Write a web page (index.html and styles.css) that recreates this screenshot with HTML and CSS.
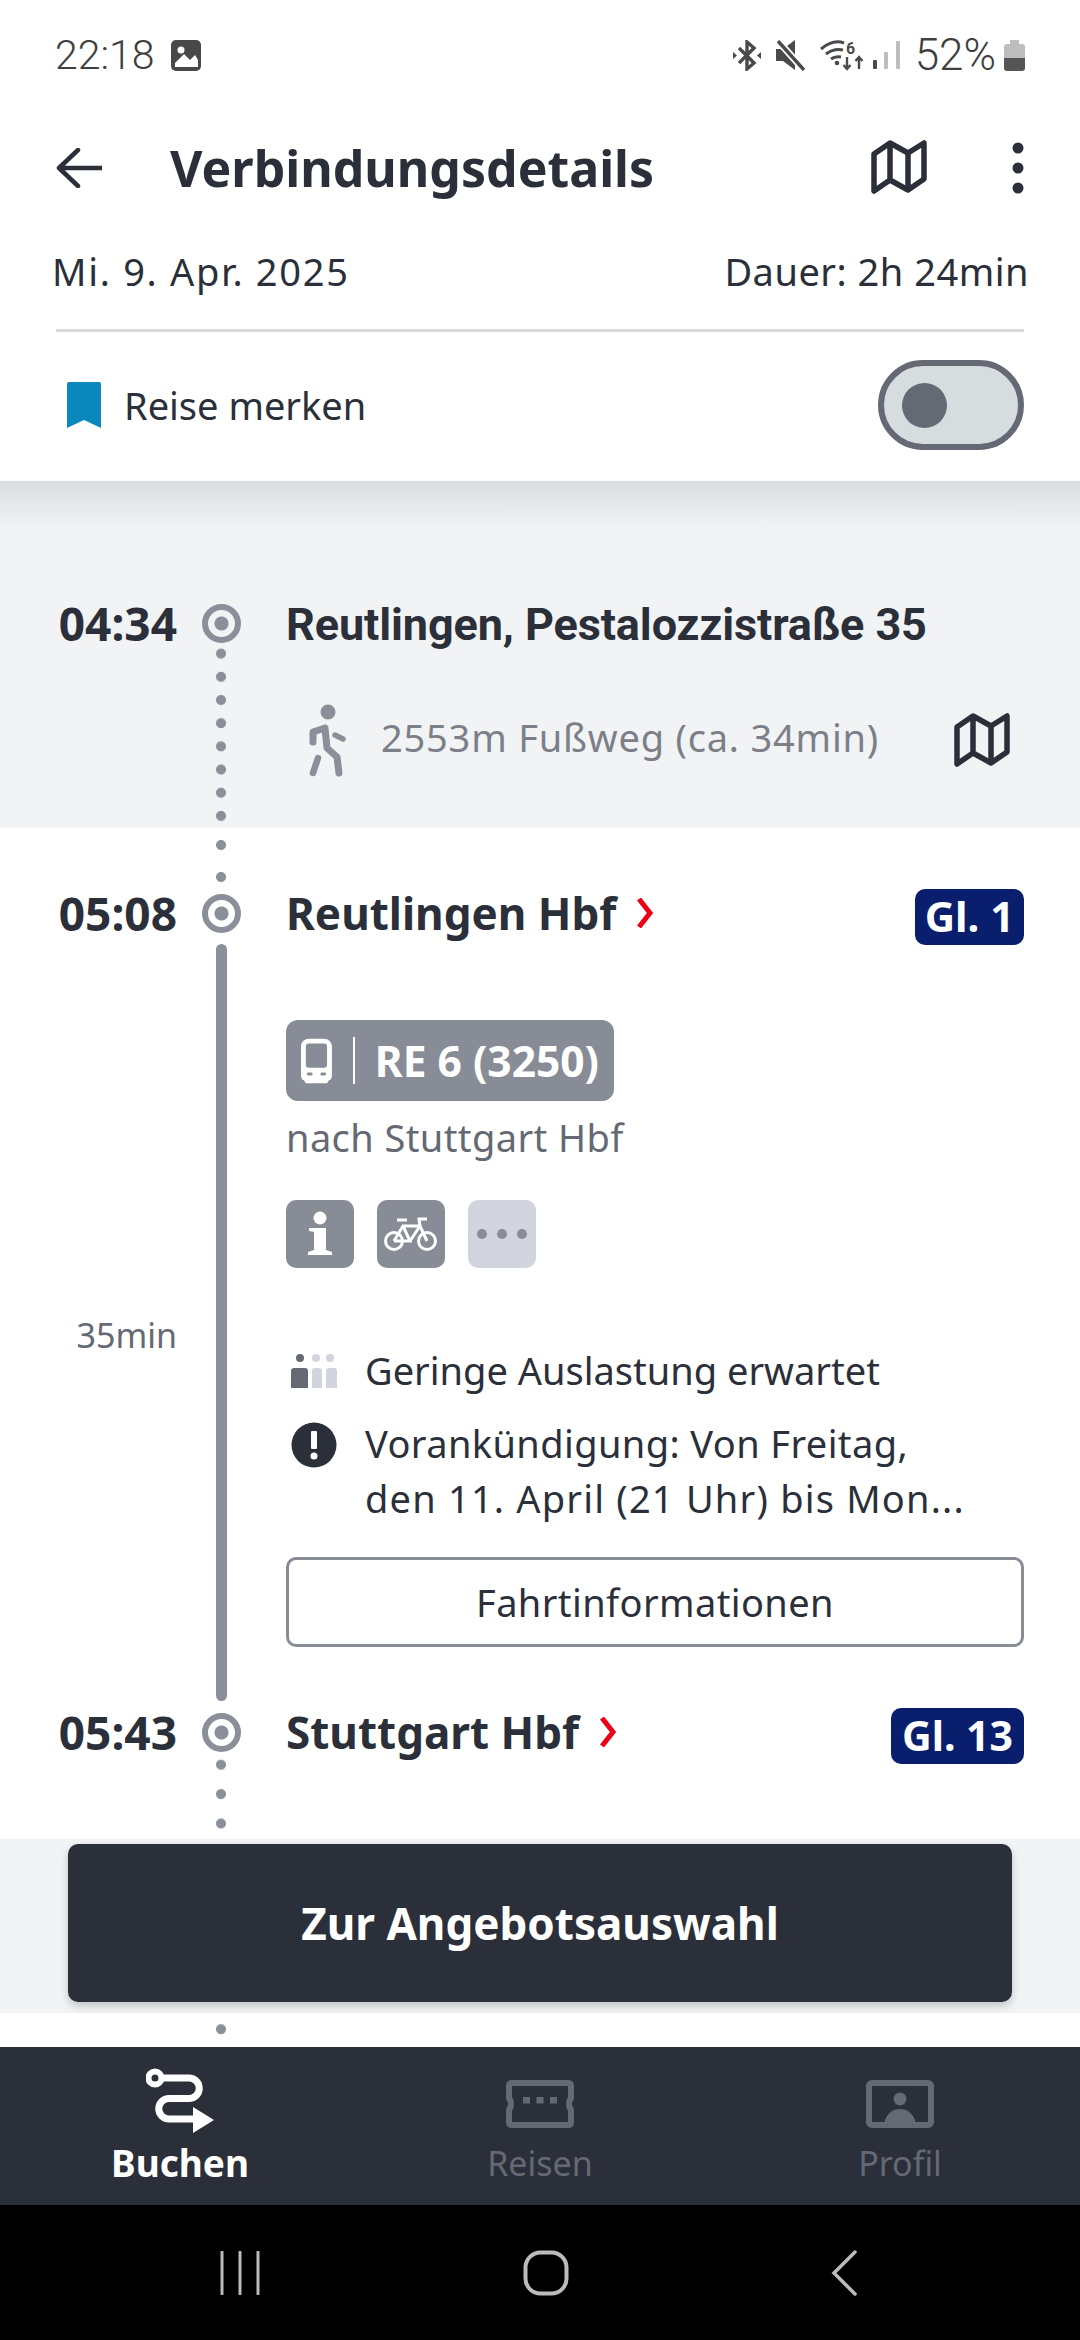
FILE: index.html
```html
<!DOCTYPE html>
<html lang="de">
<head>
    <meta charset="UTF-8">
    <meta name="viewport" content="width=device-width, initial-scale=1.0">
    <title>Verbindungsdetails</title>
    <link rel="stylesheet" href="styles.css">
</head>
<body>
<div class="page">
    <!-- Statusleiste -->
    <div class="status-bar">
        <div class="status-left">
            <span class="status-text">22:18</span>
            <svg width="30" height="31" viewBox="0 0 30 31"><rect width="30" height="31" rx="5" fill="#484848"/><circle cx="10" cy="10" r="3.500" fill="#fff"/><path d="M4 27 V23 L13 14 L19 20 L24 15 L27 20 V27 Z" fill="#fff"/></svg>
        </div>
        <div class="status-right">
            <svg width="28" height="31" viewBox="0 0 28 31"><path d="M6 8 L21 23 L14 29 V2 L21 8 L6 23" fill="none" stroke="#4a4a4a" stroke-width="3.4"/><path d="M0 12 L4 15.5 L0 19 Z M28 12 L24 15.5 L28 19 Z" fill="#4a4a4a"/></svg>
            <svg width="30" height="31" viewBox="0 0 30 31"><path d="M1 9 H8 L20 0 V30 L8 21 H1 Z" fill="#4a4a4a"/><path d="M3 1 L29 30" stroke="#fff" stroke-width="7"/><path d="M3 1 L29 30" stroke="#4a4a4a" stroke-width="3.4"/></svg>
            <svg width="45" height="32" viewBox="0 0 45 32"><g fill="none" stroke="#4a4a4a" stroke-width="3"><path d="M2 10 Q14 0 25 4"/><path d="M7 15 Q15 9 24 11"/><path d="M12 20 Q16 17 22 18"/></g><circle cx="18" cy="24" r="2.3" fill="#4a4a4a"/><text class="wifi-six" x="27" y="15">6</text><path d="M28 18 V30 M24.500 26 L28 30 L31.500 26 M40 30 V18 M36.500 22 L40 18 L43.500 22" fill="none" stroke="#4a4a4a" stroke-width="2.400"/></svg>
            <svg class="status-tight" width="29" height="30" viewBox="0 0 29 30"><rect x="1" y="20" width="4" height="9" rx="1" fill="#4a4a4a"/><rect x="12" y="12" width="4" height="17" rx="1" fill="#bdbdbd"/><rect x="24" y="1" width="4" height="28" rx="1" fill="#bdbdbd"/></svg>
            <span class="status-text status-percent">52%</span>
            <svg class="status-tight" width="21" height="31" viewBox="0 0 21 31"><path d="M6 0 H15 V4 H18 Q21 4 21 7 V18 H0 V7 Q0 4 3 4 H6 Z" fill="#bdbdbd"/><path d="M0 18 H21 V28 Q21 31 18 31 H3 Q0 31 0 28 Z" fill="#555"/></svg>
        </div>
    </div>

    <!-- Kopfbereich -->
    <header class="app-header">
        <div class="title-bar">
            <svg width="46" height="40" viewBox="0 0 46 40"><path d="M22 2 L3 20 L22 38 M3 20 H46" fill="none" stroke="#2b2f3a" stroke-width="4.500" stroke-linecap="round" stroke-linejoin="round"/></svg>
            <h1>Verbindungsdetails</h1>
            <svg class="map-icon" width="56" height="55" viewBox="0 0 56 55"><use href="#map"/></svg>
            <svg class="more-icon" width="12" height="52" viewBox="0 0 12 52"><circle cx="6" cy="6" r="5.500"/><circle cx="6" cy="26" r="5.500"/><circle cx="6" cy="46" r="5.500"/></svg>
        </div>
        <div class="meta-row">
            <span class="meta-date">Mi. 9. Apr. 2025</span>
            <span class="meta-duration">Dauer: 2h 24min</span>
        </div>
        <div class="divider"></div>
        <div class="save-row">
            <svg width="34" height="46" viewBox="0 0 34 46"><path d="M2 0 H32 Q34 0 34 2 V46 L17 38 L0 46 V2 Q0 0 2 0 Z" fill="#0a87bd"/></svg>
            <span class="save-label">Reise merken</span>
            <div class="toggle"><span class="toggle-knob"></span></div>
        </div>
    </header>

    <main class="journey">
        <!-- Fussweg -->
        <section class="walk-section">
            <div class="stop">
                <span class="stop-time">04:34</span>
                <span class="stop-ring"></span>
                <span class="stop-name stop-name-address">Reutlingen, Pestalozzistraße 35</span>
            </div>
            <div class="segment">
                <span></span>
                <div class="rail rail-dots-tight"></div>
                <div class="walk-row">
                    <svg width="40" height="74" viewBox="0 0 40 74"><circle cx="20" cy="8" r="7.500" fill="#8a8f9a"/><g fill="none" stroke="#8a8f9a" stroke-linecap="round" stroke-linejoin="round"><path d="M5 38 V28 L17 24 L19 44 L29 53 L31 69" stroke-width="7"/><path d="M10 54 L5 69" stroke-width="6.500"/><path d="M27 31 L35 35" stroke-width="5.500"/></g></svg>
                    <span class="walk-text">2553m Fußweg (ca. 34min)</span>
                    <svg class="walk-map" width="58" height="55" viewBox="0 0 56 55"><use href="#map"/></svg>
                </div>
            </div>
        </section>

        <!-- Zug -->
        <section class="leg-section">
            <div class="connector"><span></span><div class="rail rail-dots-wide"></div></div>
            <div class="stop">
                <span class="stop-time">05:08</span>
                <span class="stop-ring"></span>
                <span class="stop-name">Reutlingen Hbf</span>
                <svg class="stop-chevron" width="18" height="30" viewBox="0 0 18 30"><path d="M3 1 L14 15 L3 29" fill="none" stroke="#ec0016" stroke-width="5"/></svg>
                <span class="track">Gl. 1</span>
            </div>
            <div class="segment">
                <span class="duration">35min</span>
                <div class="rail"><div class="rail-line"></div></div>
                <div class="leg-body">
                    <div class="train-badge">
                        <svg width="32" height="46" viewBox="0 0 32 46"><path fill-rule="evenodd" d="M9 0 H23 Q32 0 32 9 V38 Q32 42 29 43 L27 46 H5 L3 43 Q0 42 0 38 V9 Q0 0 9 0 Z M8 5 Q5 5 5 8 V27 Q5 30 8 30 H24 Q27 30 27 27 V8 Q27 5 24 5 Z" fill="#fff"/><rect x="6" y="35" width="6" height="3" rx="1.500" fill="#878c96"/><rect x="20" y="35" width="6" height="3" rx="1.500" fill="#878c96"/></svg>
                        <span class="train-sep"></span>
                        <span class="train-name">RE 6 (3250)</span>
                    </div>
                    <div class="destination">nach Stuttgart Hbf</div>
                    <div class="amenities">
                        <span class="amenity">
                            <svg width="68" height="68" viewBox="0 0 68 68"><circle cx="34" cy="18" r="6.500" fill="#fff"/><path d="M23 28 H40 V50 L46 52 V55 H22 V52 L28 50 V32 L23 31 Z" fill="#fff"/></svg>
                        </span>
                        <span class="amenity">
                            <svg width="68" height="68" viewBox="0 0 68 68"><g fill="none" stroke="#fff" stroke-width="3"><circle cx="17" cy="41" r="8.500"/><circle cx="50" cy="41" r="8.500"/><path d="M17 41 L26 26 H43 L50 41 M17 41 H33 L26 26 M33 41 L43 26 L42 19 H50 M20 20 H30"/></g></svg>
                        </span>
                        <span class="amenity amenity-more">
                            <svg width="68" height="68" viewBox="0 0 68 68"><circle cx="14" cy="34" r="5" fill="#878c96"/><circle cx="34" cy="34" r="5" fill="#878c96"/><circle cx="54" cy="34" r="5" fill="#878c96"/></svg>
                        </span>
                    </div>
                    <div class="note note-load">
                        <svg width="46" height="34" viewBox="0 0 46 34"><circle cx="9" cy="4" r="4" fill="#646973"/><circle cx="25" cy="4" r="4" fill="#d2d5de"/><circle cx="39" cy="4" r="4" fill="#d2d5de"/><path d="M0 17 Q0 14 3 14 H14 Q17 14 17 17 V34 H0 Z" fill="#646973"/><path d="M21 17 Q21 14 24 14 H28 Q31 14 31 17 V34 H21 Z" fill="#d2d5de"/><path d="M35 17 Q35 14 38 14 H43 Q46 14 46 17 V34 H35 Z" fill="#d2d5de"/></svg>
                        <span>Geringe Auslastung erwartet</span>
                    </div>
                    <div class="note note-alert">
                        <svg width="46" height="46" viewBox="0 0 46 46"><circle cx="23" cy="23" r="22.500" fill="#2b2f3a"/><rect x="20" y="9" width="6" height="18" rx="1" fill="#fff"/><circle cx="23" cy="34" r="3.500" fill="#fff"/></svg>
                        <span class="note-text"><span class="note-first">Vorankündigung: Von Freitag,</span><br><span class="note-second">den 11. April (21 Uhr) bis Mon...</span></span>
                    </div>
                    <button class="outline-btn" type="button">Fahrtinformationen</button>
                </div>
            </div>
            <div class="stop">
                <span class="stop-time">05:43</span>
                <span class="stop-ring"></span>
                <span class="stop-name">Stuttgart Hbf</span>
                <svg class="stop-chevron" width="18" height="30" viewBox="0 0 18 30"><path d="M3 1 L14 15 L3 29" fill="none" stroke="#ec0016" stroke-width="5"/></svg>
                <span class="track track-wide">Gl. 13</span>
            </div>
            <div class="tail"><span></span><div class="rail rail-dots-mid"></div></div>
        </section>

        <!-- liegt ueber dem Inhalt -->
        <div class="cta-bar">
            <button class="cta-button" type="button">Zur Angebotsauswahl</button>
        </div>
    </main>

    <!-- Navigation -->
    <nav class="bottom-nav">
        <a class="nav-item nav-item-active" href="#">
            <svg width="68" height="65" viewBox="0 0 68 65"><circle cx="9" cy="10" r="6.500" fill="none" stroke="#fff" stroke-width="6"/><path d="M16 10 H43 A10.250 10.250 0 0 1 43 30.500 H23 A10.250 10.250 0 0 0 23 51 H50" fill="none" stroke="#fff" stroke-width="7"/><path d="M47 39 L68 52 L47 65 Z" fill="#fff"/></svg>
            <span>Buchen</span>
        </a>
        <a class="nav-item" href="#">
            <svg class="nav-svg" width="68" height="48" viewBox="0 0 68 48"><path d="M3 6 Q3 3 6 3 H62 Q65 3 65 6 V18 Q61 24 65 30 V42 Q65 45 62 45 H6 Q3 45 3 42 V30 Q7 24 3 18 Z" fill="none" stroke="#646973" stroke-width="6"/><rect x="17" y="17" width="7" height="6.500" fill="#646973"/><rect x="30.500" y="17" width="7" height="6.500" fill="#646973"/><rect x="44" y="17" width="7" height="6.500" fill="#646973"/></svg>
            <span>Reisen</span>
        </a>
        <a class="nav-item" href="#">
            <svg class="nav-svg" width="68" height="48" viewBox="0 0 68 48"><rect x="3" y="3" width="62" height="42" rx="3" fill="none" stroke="#646973" stroke-width="6"/><circle cx="34" cy="19" r="6.500" fill="#646973"/><path d="M18 44 C20 33 27 29 34 29 C41 29 48 33 50 44 Z" fill="#646973"/></svg>
            <span>Profil</span>
        </a>
    </nav>

    <div class="system-nav">
        <svg width="40" height="44" viewBox="0 0 40 44"><path d="M2 1 V43 M20 1 V43 M38 1 V43" stroke="#bbb" stroke-width="3" stroke-linecap="round"/></svg>
        <svg width="46" height="46" viewBox="0 0 46 46"><rect x="2.500" y="2.500" width="41" height="41" rx="15" fill="none" stroke="#bbb" stroke-width="4"/></svg>
        <svg width="26" height="46" viewBox="0 0 26 46"><path d="M24 2 L3 23 L24 44" fill="none" stroke="#bbb" stroke-width="3.500" stroke-linecap="round"/></svg>
    </div>

    <svg class="svg-defs" width="0" height="0"><defs><path id="map" d="M3 15 L19 4 L37 14 L53 4 V40 L37 51 L19 41 L3 52 Z M19 4 V41 M37 14 V51" fill="none" stroke="#2b2f3a" stroke-width="5.500" stroke-linejoin="round"/></defs></svg>
</div>
</body>
</html>
```

FILE: styles.css
```css
/* Grundlayout */
* {
    box-sizing: border-box;
}

body {
    margin: 0;
    font-family: "Noto Sans", Arial, sans-serif;
    background-color: #fff;
    color: #2b2f3a;
}

.page {
    width: 1080px;
    height: 2340px;
    display: flex;
    flex-direction: column;
    overflow: hidden;
}

.svg-defs {
    position: absolute;
}

/* Statusleiste */
.status-bar {
    height: 110px;
    flex-shrink: 0;
    padding: 0 55px;
    display: flex;
    justify-content: space-between;
    align-items: center;
}

.status-left,
.status-right {
    display: flex;
    align-items: center;
}

.status-left {
    gap: 16px;
}

.status-right {
    gap: 14px;
}

.status-tight {
    margin-left: -6px;
}

.status-text {
    font-family: Roboto, sans-serif;
    font-size: 41px;
    font-weight: 300;
    line-height: 46px;
    color: #3f3f3f;
}

.status-percent {
    font-size: 44px;
}

.wifi-six {
    font-family: Roboto, sans-serif;
    font-size: 16px;
    font-weight: 700;
    fill: #4a4a4a;
}

/* Kopfbereich */
.app-header {
    flex-shrink: 0;
}

.title-bar {
    height: 116px;
    padding: 0 56px;
    display: flex;
    align-items: center;
}

.title-bar h1 {
    margin: 0 0 0 68px;
    font-size: 50px;
    font-weight: 700;
    line-height: 60px;
}

.map-icon {
    margin: -4px 85px 0 auto;
}

.more-icon {
    fill: #2b2f3a;
}

.meta-row {
    height: 90px;
    padding: 0 51px 0 52px;
    display: flex;
    justify-content: space-between;
    align-items: center;
    font-size: 38px;
}

.meta-date {
    letter-spacing: 1.7px;
}

.meta-duration {
    letter-spacing: 0.5px;
}

.divider {
    height: 3px;
    margin: 13px 56px 0;
    background-color: #d7dadd;
}

.save-row {
    height: 149px;
    padding: 0 56px 3px 67px;
    display: flex;
    align-items: center;
}

.save-label {
    margin-left: 23px;
    font-size: 38px;
}

.toggle {
    width: 146px;
    height: 90px;
    margin-left: auto;
    padding-left: 18px;
    display: flex;
    align-items: center;
    border: 6px solid #646973;
    border-radius: 45px;
    background-color: #d7dcdf;
}

.toggle-knob {
    width: 45px;
    height: 45px;
    border-radius: 50%;
    background-color: #646973;
}

/* Verbindung */
.journey {
    flex: 1;
    min-height: 0;
    position: relative;
    display: flex;
    flex-direction: column;
    overflow: hidden;
    background-color: #fff;
}

.walk-section {
    height: 347px;
    padding-top: 119px;
    flex-shrink: 0;
    background: linear-gradient(#dadde0, #f2f3f5) top / 100% 50px no-repeat #f2f3f5;
}

.leg-section {
    flex: 1;
    display: flex;
    flex-direction: column;
}

.stop,
.segment,
.connector,
.tail {
    display: grid;
    grid-template-columns: 177px 88px 1fr;
    padding-right: 56px;
}

.stop {
    height: 46px;
    flex-shrink: 0;
    grid-template-columns: 177px 88px auto auto 1fr;
    grid-template-rows: 46px;
    align-items: center;
}

.stop-time {
    font-size: 46px;
    font-weight: 700;
    line-height: 46px;
    text-align: right;
    white-space: nowrap;
}

.stop-ring {
    width: 39px;
    height: 39px;
    justify-self: center;
    border: 6px solid #8a8f9a;
    border-radius: 50%;
    background: radial-gradient(circle, #8a8f9a 0 6.500px, transparent 7.500px);
}

.stop-name {
    margin-left: 21px;
    font-size: 44px;
    font-weight: 700;
    line-height: 46px;
    white-space: nowrap;
}

.stop-name-address {
    margin-top: 4px;
    font-family: Roboto, sans-serif;
    font-size: 45px;
    letter-spacing: -0.1px;
}

.stop-chevron {
    margin-left: 20px;
}

.track {
    justify-self: end;
    align-self: start;
    height: 56px;
    width: 109px;
    margin-top: -1px;
    border-radius: 10px;
    background-color: #0a1e6e;
    color: #fff;
    font-size: 42px;
    font-weight: 700;
    line-height: 54px;
    text-align: center;
    white-space: nowrap;
}

.track-wide {
    width: 133px;
    font-size: 41px;
}

.rail {
    display: flex;
    justify-content: center;
}

.rail-line {
    width: 11px;
    margin: 8px 0;
    border-radius: 6px;
    background-color: #8a8f9a;
}

.rail-dots-tight {
    background: radial-gradient(circle at center, #8a8f9a 0 4.500px, transparent 5.500px) center 0 / 100% 23.200px repeat-y;
    background-position-y: -4px;
}

.rail-dots-wide {
    background: radial-gradient(circle at center, #8a8f9a 0 4.500px, transparent 5.500px) center 0 / 100% 32px repeat-y;
    background-position-y: 1px;
}

.rail-dots-mid {
    background: radial-gradient(circle at center, #8a8f9a 0 4.500px, transparent 5.500px) center 0 / 100% 29.400px repeat-y;
    background-position-y: -5px;
}

.segment {
    flex-shrink: 0;
}

.walk-section .segment {
    height: 182px;
}

.connector {
    height: 62px;
    flex-shrink: 0;
}

.tail {
    flex: 1;
}

/* Fussweg */
.walk-row {
    padding: 58px 13px 0 43px;
    display: flex;
    align-items: flex-start;
}

.walk-text {
    margin-left: 33px;
    margin-top: 2px;
    font-size: 38px;
    letter-spacing: 0.8px;
    line-height: 62px;
    color: #7b8088;
}

.walk-map {
    margin: 8px 0 0 auto;
}

/* Zug */
.duration {
    align-self: center;
    padding-top: 24px;
    text-align: right;
    font-size: 34px;
    color: #646973;
}

.leg-body {
    padding: 84px 0 62px 21px;
}

.train-badge {
    width: 328px;
    height: 81px;
    padding: 0 15px;
    display: flex;
    align-items: center;
    border-radius: 12px;
    background-color: #878c96;
}

.train-sep {
    width: 2px;
    height: 47px;
    margin: 0 20px 0 21px;
    background-color: #fff;
}

.train-name {
    color: #fff;
    font-size: 42.500px;
    font-weight: 700;
    white-space: nowrap;
}

.destination {
    height: 99px;
    padding-top: 11px;
    font-size: 38px;
    letter-spacing: 0.4px;
    line-height: 50px;
    color: #646973;
}

.amenities {
    display: flex;
    gap: 23px;
}

.amenity {
    width: 68px;
    height: 68px;
    display: block;
    border-radius: 10px;
    background-color: #878c96;
}

.amenity-more {
    background-color: #d2d5de;
}

.note {
    display: flex;
    font-size: 38px;
    line-height: 55px;
}

.note svg {
    flex-shrink: 0;
    margin-left: 5px;
    margin-right: 28px;
}

.note-load {
    margin-top: 75px;
    align-items: center;
}

.note-alert {
    margin-top: 18px;
    align-items: flex-start;
}

.note-alert svg {
    margin-top: 6px;
}

.note-first {
    letter-spacing: 0.4px;
}

.note-second {
    letter-spacing: 1.2px;
}

.outline-btn {
    width: 100%;
    height: 90px;
    margin-top: 31px;
    border: 3px solid #878c96;
    border-radius: 10px;
    background-color: #fff;
    color: #2b2f3a;
    font-family: inherit;
    font-size: 38px;
    letter-spacing: 0.4px;
}

/* Button ueber dem Inhalt */
.cta-bar {
    position: absolute;
    left: 0;
    right: 0;
    bottom: 34px;
    height: 174px;
    padding: 5px 68px 0;
    background-color: #f2f3f5;
}

.cta-button {
    width: 100%;
    height: 158px;
    border: none;
    border-radius: 10px;
    background-color: #2b2f3a;
    box-shadow: 0 4px 8px rgba(0, 0, 0, 0.2);
    color: #fff;
    font-family: inherit;
    font-size: 44px;
    font-weight: 700;
}

/* Navigation */
.bottom-nav {
    height: 158px;
    flex-shrink: 0;
    display: flex;
    background-color: #2b2f3a;
}

.nav-item {
    flex: 1;
    padding-top: 21px;
    display: flex;
    flex-direction: column;
    align-items: center;
    color: #646973;
    font-size: 34px;
    line-height: 46px;
    text-decoration: none;
}

.nav-item span {
    margin-top: 7px;
}

.nav-svg {
    margin-top: 12px;
    margin-bottom: 5px;
}

.nav-item-active {
    color: #fff;
    font-size: 37px;
    font-weight: 700;
}

.system-nav {
    height: 135px;
    flex-shrink: 0;
    background-color: #000;
    display: flex;
    justify-content: space-between;
    align-items: center;
    padding: 0 223px 0 220px;
}
```
